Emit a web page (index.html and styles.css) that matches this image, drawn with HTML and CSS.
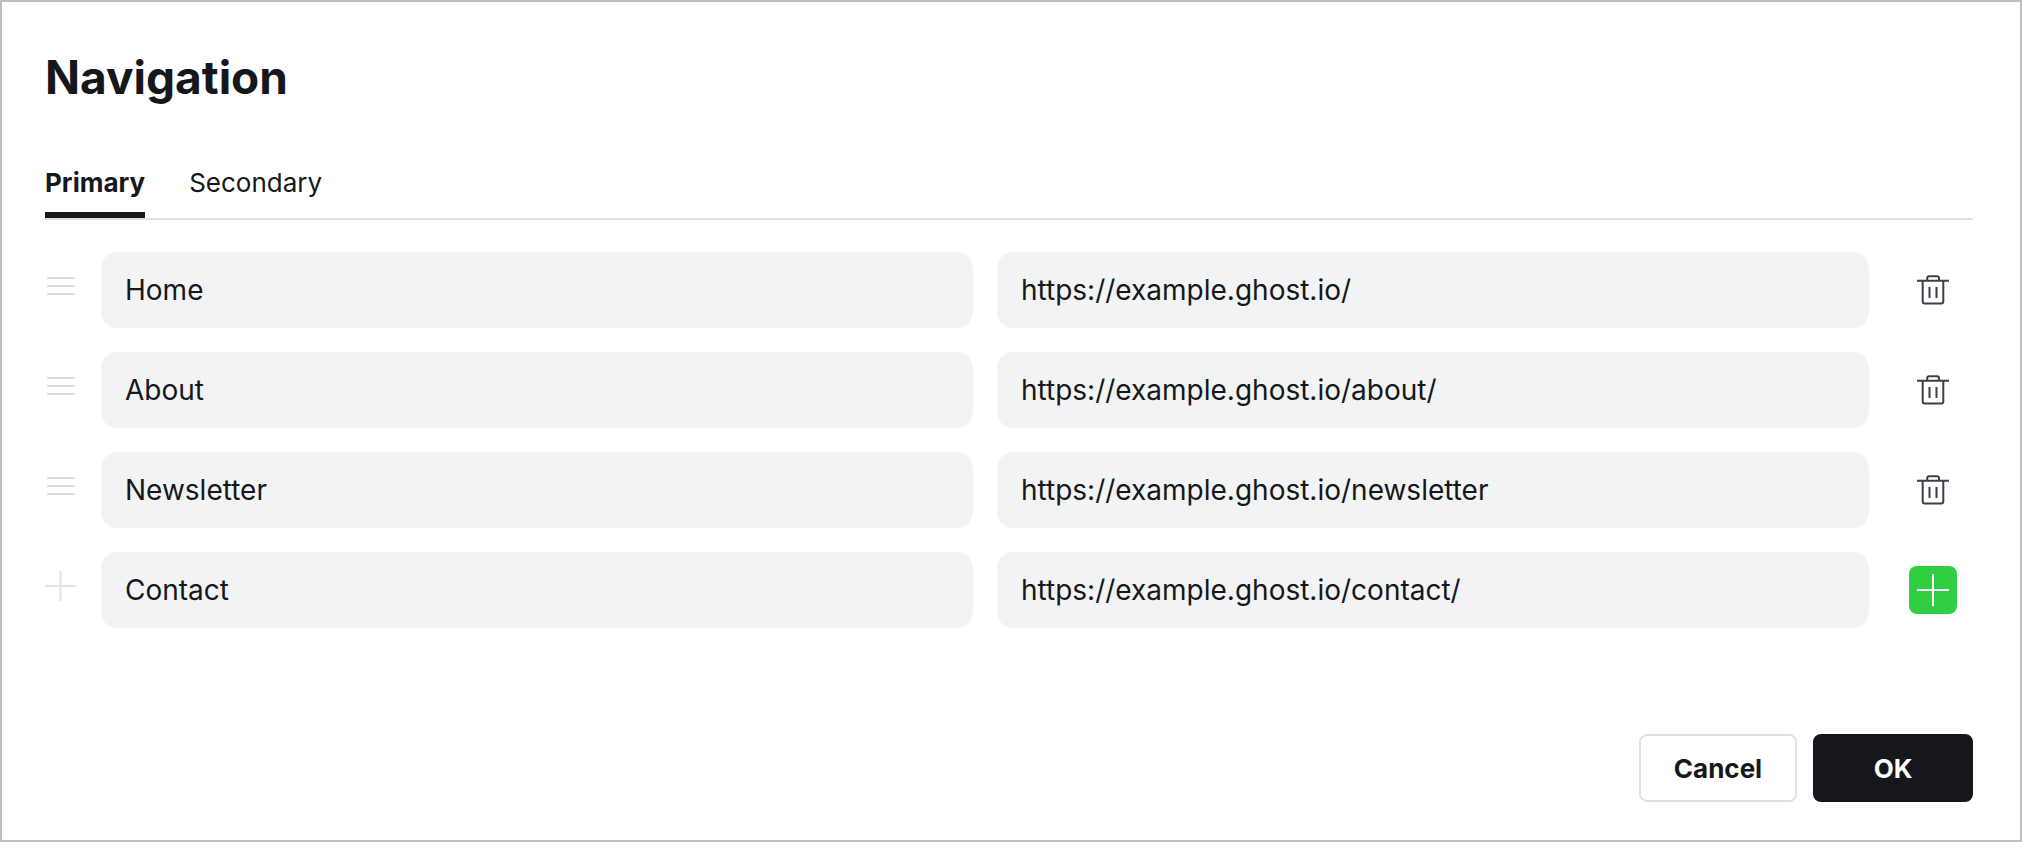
FILE: index.html
```html
<!DOCTYPE html>
<html lang="en">
<head>
<meta charset="utf-8">
<meta name="viewport" content="width=device-width, initial-scale=1">
<title>Navigation</title>
<link rel="stylesheet" href="styles.css">
</head>
<body>
<svg class="sprite" aria-hidden="true">
  <symbol id="icon-drag" viewBox="0 0 32 32"><path d="M3 8h26M3 16h26M3 24h26" fill="none" stroke="currentColor" stroke-width="2" stroke-linecap="round"/></symbol>
  <symbol id="icon-plus" viewBox="0 0 32 32"><path d="M16 0v32M0 16h32" fill="none" stroke="currentColor" stroke-width="2"/></symbol>
  <symbol id="icon-plus-round" viewBox="0 0 32 32"><path d="M15.500 1.500v29M1 16h29" fill="none" stroke="currentColor" stroke-width="2" stroke-linecap="round"/></symbol>
  <symbol id="icon-trash" viewBox="0 0 32 32"><path d="M0 6.700h32M5.700 6.700v20.800a2 2 0 0 0 2 2h16.600a2 2 0 0 0 2-2V6.700M10.200 6.700V4.200a2 2 0 0 1 2-2H20a2 2 0 0 1 2 2v2.500M12.500 13v11M19.500 13v11" fill="none" stroke="currentColor" stroke-width="2"/></symbol>
</svg>
<main class="modal">
  <h1 class="title">Navigation</h1>
  <div class="tabs" role="tablist">
    <button class="tab tab-active" type="button" role="tab" aria-selected="true">Primary</button>
    <button class="tab" type="button" role="tab" aria-selected="false">Secondary</button>
  </div>
  <form class="form">
    <div class="items">
      <div class="item">
        <span class="handle"><svg class="icon"><use href="#icon-drag"/></svg></span>
        <input class="field" type="text" aria-label="Label" value="Home">
        <input class="field" type="text" aria-label="URL" value="https://example.ghost.io/">
        <button class="action" type="button" aria-label="Delete"><svg class="icon"><use href="#icon-trash"/></svg></button>
      </div>
      <div class="item">
        <span class="handle"><svg class="icon"><use href="#icon-drag"/></svg></span>
        <input class="field" type="text" aria-label="Label" value="About">
        <input class="field" type="text" aria-label="URL" value="https://example.ghost.io/about/">
        <button class="action" type="button" aria-label="Delete"><svg class="icon"><use href="#icon-trash"/></svg></button>
      </div>
      <div class="item">
        <span class="handle"><svg class="icon"><use href="#icon-drag"/></svg></span>
        <input class="field" type="text" aria-label="Label" value="Newsletter">
        <input class="field" type="text" aria-label="URL" value="https://example.ghost.io/newsletter">
        <button class="action" type="button" aria-label="Delete"><svg class="icon"><use href="#icon-trash"/></svg></button>
      </div>
      <div class="item">
        <span class="handle handle-new"><svg class="icon"><use href="#icon-plus-round"/></svg></span>
        <input class="field" type="text" aria-label="Label" value="Contact">
        <input class="field" type="text" aria-label="URL" value="https://example.ghost.io/contact/">
        <button class="action action-add" type="button" aria-label="Add"><svg class="icon"><use href="#icon-plus"/></svg></button>
      </div>
    </div>
    <div class="footer">
      <button class="btn" type="button">Cancel</button>
      <button class="btn btn-primary" type="submit">OK</button>
    </div>
  </form>
</main>
</body>
</html>
```
FILE: styles.css
```css
*, *::before, *::after { box-sizing: border-box; }
body {
  margin: 0;
  background: #fff;
  color: #15171a;
  font-family: Inter, "Liberation Sans", sans-serif;
}
button, input { font: inherit; color: inherit; }
button { cursor: pointer; }
.sprite { position: absolute; width: 0; height: 0; }
.icon { display: block; width: 32px; height: 32px; }
.modal {
  display: flex;
  flex-direction: column;
  min-height: 100vh;
  padding: 45px 47px 38px 43px;
  border: 2px solid #bfbfbf;
}
.title {
  margin: 0;
  font-size: 46px;
  line-height: 60px;
  font-weight: 700;
}
.tabs {
  display: flex;
  gap: 44px;
  margin-top: 58px;
  border-bottom: 2px solid #dde1e5;
}
.tab {
  padding: 0 0 11px;
  border: 0;
  border-bottom: 6px solid transparent;
  background: none;
  font-size: 26px;
  line-height: 36px;
}
.tab-active {
  border-bottom-color: #15171a;
  font-weight: 700;
}
.form {
  display: flex;
  flex: 1;
  flex-direction: column;
  justify-content: space-between;
  padding-top: 32px;
}
.items { display: grid; gap: 24px; }
.item {
  display: grid;
  grid-template-columns: 32px minmax(0, 1fr) minmax(0, 1fr) 80px;
  column-gap: 24px;
  align-items: center;
}
.handle { padding-bottom: 8px; color: #d5dae0; }
.handle-new { color: #dfe2e8; }
.field {
  width: 100%;
  height: 76px;
  padding: 0 24px;
  border: 0;
  border-radius: 16px;
  background: #f1f3f4;
  font-size: 28px;
}
.action {
  display: grid;
  place-items: center;
  justify-self: center;
  width: 48px;
  height: 48px;
  padding: 0;
  border: 0;
  border-radius: 8px;
  background: none;
  color: #394047;
}
.action-add { background: #30cf43; color: #fff; }
.footer {
  display: flex;
  justify-content: flex-end;
  gap: 16px;
}
.btn {
  min-width: 158px;
  height: 68px;
  padding: 0 32px;
  border: 2px solid #dde1e5;
  border-radius: 8px;
  background: #fff;
  font-size: 26px;
  font-weight: 700;
}
.btn-primary {
  min-width: 160px;
  border-color: #15171a;
  background: #15171a;
  color: #fff;
}
```
